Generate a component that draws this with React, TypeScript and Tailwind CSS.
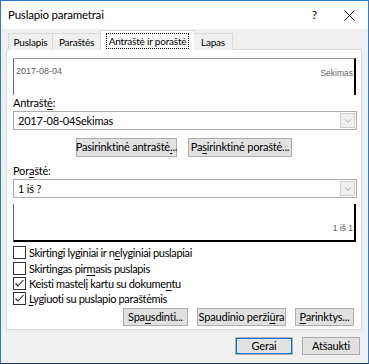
import { ChevronDown } from 'lucide-react';

const font = { fontFamily: 'Lato, "Noto Sans", sans-serif' };

function U({ children }: { children: string }) {
  return <span className="underline underline-offset-2">{children}</span>;
}

function Btn({ children, className = '' }: { children: React.ReactNode; className?: string }) {
  return (
    <div
      className={`flex items-center justify-center whitespace-nowrap bg-[#e1e1e1] border border-[#adadad] text-[11px] tracking-[-0.2px] text-black ${className}`}
    >
      {children}
    </div>
  );
}

function Select({ value }: { value: string }) {
  return (
    <div className="h-[19px] flex items-center bg-white border border-[#adadad] pl-[4px]">
      <span className="flex-1 text-[11px] tracking-[-0.2px] leading-none text-black">{value}</span>
      <div className="w-[15px] h-[15px] mr-[1px] flex items-center justify-center bg-[#f0f0f0] border border-[#cfcfcf]">
        <ChevronDown size={10} strokeWidth={1.2} className="text-[#606060]" />
      </div>
    </div>
  );
}

function Check({ checked, children }: { checked?: boolean; children: React.ReactNode }) {
  return (
    <div className="flex items-center h-full gap-[3px]">
      <div className="w-[13px] h-[13px] border border-[#333] bg-white flex items-center justify-center">
        {checked && (
          <svg width="11" height="11" viewBox="0 0 11 11">
            <path d="M1.5 5.5 L4 8 L9.5 2" fill="none" stroke="#222" strokeWidth="1.1" />
          </svg>
        )}
      </div>
      <span className="text-[11px] tracking-[-0.35px] leading-none text-black whitespace-nowrap">{children}</span>
    </div>
  );
}

export default function App() {
  return (
    <div
      className="w-[369px] h-[364px] bg-[#f0f0f0] border border-[#2b7bd1] border-b-[#1b3f6a] flex flex-col text-black text-[11px] tracking-[-0.2px]"
      style={font}
    >
      {/* title bar */}
      <div className="h-[28px] bg-white flex items-center pl-[7px] shrink-0">
        <span className="flex-1 text-[11.5px]">Puslapio parametrai</span>
        <span className="text-[12px] mr-[27px]">?</span>
        <svg width="11" height="11" viewBox="0 0 11 11" className="mr-[13px]">
          <path d="M0.5 0.5 L10.5 10.5 M10.5 0.5 L0.5 10.5" stroke="#111" strokeWidth="1" />
        </svg>
      </div>

      <div className="flex-1 flex flex-col pl-[5px] pr-[6px]">
        {/* tabs */}
        <div className="h-[20px] mt-[1px] flex items-end -mb-px relative z-10 pl-[2px] whitespace-nowrap text-[10px]">
          <div className="w-[45px] h-[17px] flex items-center justify-center border border-b-0 border-[#d9d9d9] bg-[#f0f0f0]">Puslapis</div>
          <div className="w-[48px] h-[17px] flex items-center justify-center border border-b-0 border-l-0 border-[#d9d9d9] bg-[#f0f0f0]">Paraštės</div>
          <div className="w-[95px] h-[20px] flex items-center justify-center border border-b-0 border-[#d9d9d9] bg-white -mx-px">
            <span className="border border-dotted border-black px-[2px] leading-[14px]">Antraštė ir poraštė</span>
          </div>
          <div className="w-[39px] h-[17px] flex items-center justify-center border border-b-0 border-l-0 border-[#d9d9d9] bg-[#f0f0f0]">Lapas</div>
        </div>

        {/* panel */}
        <div className="h-[281px] bg-white border border-[#d9d9d9] flex flex-col pl-[6px] pr-[4px]">
          <div
            className="mt-[8px] mr-[1px] h-[37px] border-l border-t border-l-[#6d6d6d] border-t-[#a0a0a0] border-r-2 border-r-black flex justify-between items-start pl-[2px] pr-[1px] pt-[6px] text-[#5f5f5f] text-[9px] tracking-normal"
            style={{ fontFamily: '"Liberation Sans", Arial, sans-serif' }}
          >
            <span>2017-08-04</span>
            <span className="pt-[2px] text-[8.5px]">Sekimas</span>
          </div>

          <div className="h-[16px] leading-[15px]">
            Antrašt<U>ė</U>:
          </div>
          <Select value="2017-08-04Sekimas" />

          <div className="mt-[8px] flex justify-center gap-[11px] pr-[2px]">
            <Btn className="w-[101px] h-[19px]">
              Pasirinktinė antraštė<U>.</U>..
            </Btn>
            <Btn className="w-[104px] h-[19px]">
              Pa<U>s</U>irinktinė poraštė...
            </Btn>
          </div>

          <div className="mt-[7px] h-[15px] leading-[14px]">
            Por<U>a</U>štė:
          </div>
          <Select value="1 iš ?" />

          <div
            className="mt-[6px] mr-[1px] h-[38px] border-l border-l-[#6d6d6d] border-r-2 border-b-2 border-black flex items-end justify-end pr-[1px] pb-[5px] text-[#5f5f5f] text-[8.5px] tracking-normal"
            style={{ fontFamily: '"Liberation Sans", Arial, sans-serif' }}
          >
            <span>1 iš 1</span>
          </div>

          <div className="mt-[2px] h-[16px]">
            <Check>
              Skirtingi lyginiai ir n<U>e</U>lyginiai puslapiai
            </Check>
          </div>
          <div className="h-[16px]">
            <Check>
              Skirtingas pir<U>m</U>asis puslapis
            </Check>
          </div>
          <div className="h-[15px]">
            <Check checked>
              Keisti mastelį kartu su dokume<U>n</U>tu
            </Check>
          </div>
          <div className="h-[15px]">
            <Check checked>
              <U>L</U>ygiuoti su puslapio paraštėmis
            </Check>
          </div>

          <div className="mt-[2px] flex justify-end gap-[9px] pr-[3px]">
            <Btn className="w-[65px] h-[18px]">
              Spa<U>u</U>sdinti...
            </Btn>
            <Btn className="w-[89px] h-[18px]">
              Spaudinio perži<U>ū</U>ra
            </Btn>
            <Btn className="w-[59px] h-[18px]">
              <U>P</U>arinktys...
            </Btn>
          </div>
        </div>

        {/* bottom buttons */}
        <div className="mt-[7px] flex justify-end gap-[9px] pr-[2px]">
          <Btn className="w-[58px] h-[18px] border-[#0078d7] shadow-[inset_0_0_0_1px_#0078d7]">Gerai</Btn>
          <Btn className="w-[58px] h-[18px]">Atšaukti</Btn>
        </div>
      </div>
    </div>
  );
}
